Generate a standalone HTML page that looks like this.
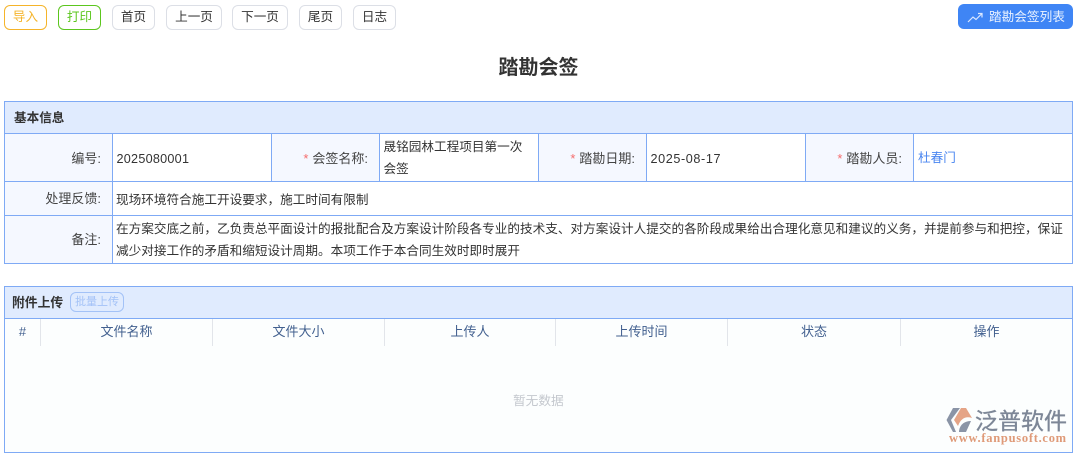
<!DOCTYPE html>
<html lang="zh"><head><meta charset="utf-8"><style>
*{box-sizing:border-box}
html,body{margin:0;padding:0}
body{width:1077px;height:453px;position:relative;overflow:hidden;background:#fff;font-family:"Liberation Sans","Noto Sans CJK SC",sans-serif;font-size:13px;color:#333}
.a{position:absolute;white-space:nowrap}
.btn{position:absolute;top:5px;height:25px;border:1px solid #dcdfe6;border-radius:6px;text-align:center;line-height:23px;font-size:12.6px;color:#333;background:#fff}
.l{position:absolute;background:#7faaf5}
.lab{position:absolute;background:#f5f8ff}
.r{position:absolute;text-align:right;white-space:nowrap;color:#444;line-height:18px}
.r i{font-style:normal;color:#f56c6c;margin-right:4px}
.t{position:absolute;white-space:nowrap;line-height:22px;color:#333;font-size:12.63px}
.th{position:absolute;top:323px;text-align:center;line-height:18px;color:#42608f}
.s{position:absolute;top:319px;width:1px;height:27px;background:#e2e5ea}
</style></head><body>
<div class="btn" style="left:4px;width:43px;border-color:#f5b42a;color:#f5b42a">导入</div>
<div class="btn" style="left:58px;width:43px;border-color:#5cc61e;color:#5cc61e">打印</div>
<div class="btn" style="left:112px;width:43px">首页</div>
<div class="btn" style="left:166px;width:56px">上一页</div>
<div class="btn" style="left:232px;width:56px">下一页</div>
<div class="btn" style="left:299px;width:43px">尾页</div>
<div class="btn" style="left:353px;width:43px">日志</div>
<div class="a" style="left:958px;top:4px;width:115px;height:25px;background:#3f85f5;border-radius:6px"></div>
<svg class="a" style="left:967px;top:12px" width="16" height="11" viewBox="0 0 16 11"><path d="M1 10 L6 5 L9 7.5 L14.5 2 M11 1.5 H15 V5.5" fill="none" stroke="#dbe8ff" stroke-width="1.2"/></svg>
<div class="a" style="left:989px;top:8px;line-height:18px;color:#eaf2ff;font-size:12.65px">踏勘会签列表</div>
<div class="a" style="left:0;width:1077px;top:54px;text-align:center;font-size:20px;font-weight:bold;line-height:28px;color:#333">踏勘会签</div>

<div class="a" style="left:4px;top:101px;width:1069px;height:33px;background:#e0ebfe"></div>
<div class="lab" style="left:5px;top:134px;width:107px;height:130px"></div>
<div class="lab" style="left:272px;top:134px;width:107px;height:47px"></div>
<div class="lab" style="left:539px;top:134px;width:107px;height:47px"></div>
<div class="lab" style="left:806px;top:134px;width:107px;height:47px"></div>
<div class="l" style="left:4px;top:101px;width:1069px;height:1px"></div>
<div class="l" style="left:4px;top:133px;width:1069px;height:1px"></div>
<div class="l" style="left:4px;top:181px;width:1069px;height:1px"></div>
<div class="l" style="left:4px;top:215px;width:1069px;height:1px"></div>
<div class="l" style="left:4px;top:263px;width:1069px;height:1px"></div>
<div class="l" style="left:4px;top:101px;width:1px;height:163px"></div>
<div class="l" style="left:1072px;top:101px;width:1px;height:163px"></div>
<div class="l" style="left:112px;top:133px;width:1px;height:131px"></div>
<div class="l" style="left:271px;top:133px;width:1px;height:48px"></div>
<div class="l" style="left:379px;top:133px;width:1px;height:48px"></div>
<div class="l" style="left:538px;top:133px;width:1px;height:48px"></div>
<div class="l" style="left:646px;top:133px;width:1px;height:48px"></div>
<div class="l" style="left:805px;top:133px;width:1px;height:48px"></div>
<div class="l" style="left:913px;top:133px;width:1px;height:48px"></div>

<div class="a" style="left:14px;top:109px;font-weight:bold;line-height:18px;font-size:12.6px">基本信息</div>
<div class="r" style="left:5px;width:96px;top:150px">编号:</div>
<div class="r" style="left:272px;width:96px;top:150px"><i>*</i>会签名称:</div>
<div class="r" style="left:539px;width:96px;top:150px"><i>*</i>踏勘日期:</div>
<div class="r" style="left:806px;width:96px;top:150px"><i>*</i>踏勘人员:</div>
<div class="r" style="left:5px;width:96px;top:190px">处理反馈:</div>
<div class="r" style="left:5px;width:96px;top:231px">备注:</div>
<div class="t" style="left:116.5px;top:148px;letter-spacing:.25px">2025080001</div>
<div class="t" style="left:383.5px;top:136px">晟铭园林工程项目第一次<br>会签</div>
<div class="t" style="left:650.5px;top:148px;letter-spacing:.6px">2025-08-17</div>
<div class="t" style="left:918px;top:147px;color:#4a86f0">杜春门</div>
<div class="t" style="left:116px;top:189px">现场环境符合施工开设要求，施工时间有限制</div>
<div class="t" style="left:116px;top:218px">在方案交底之前，乙负责总平面设计的报批配合及方案设计阶段各专业的技术支、对方案设计人提交的各阶段成果给出合理化意见和建议的义务，并提前参与和把控，保证<br>减少对接工作的矛盾和缩短设计周期。本项工作于本合同生效时即时展开</div>

<div class="a" style="left:4px;top:286px;width:1069px;height:167px;border:1px solid #7faaf5;background:#fcfefe"></div>
<div class="a" style="left:5px;top:287px;width:1067px;height:32px;background:#e0ebfe;border-bottom:1px solid #7faaf5"></div>
<div class="a" style="left:12px;top:294px;font-weight:bold;line-height:18px;font-size:12.8px">附件上传</div>
<div class="a" style="left:70px;top:292px;width:54px;height:20px;border:1px solid #a3c2f7;border-radius:6px;text-align:center;font-size:11px;line-height:18px;color:#a3c2f7">批量上传</div>
<div class="th" style="left:5px;width:35px">#</div>
<div class="th" style="left:41px;width:171px">文件名称</div>
<div class="th" style="left:213px;width:171px">文件大小</div>
<div class="th" style="left:385px;width:170px">上传人</div>
<div class="th" style="left:556px;width:171px">上传时间</div>
<div class="th" style="left:728px;width:172px">状态</div>
<div class="th" style="left:901px;width:171px">操作</div>
<div class="s" style="left:40px"></div><div class="s" style="left:212px"></div><div class="s" style="left:384px"></div><div class="s" style="left:555px"></div><div class="s" style="left:727px"></div><div class="s" style="left:900px"></div>
<div class="a" style="left:513px;top:392px;line-height:18px;color:#c4c8ce;font-size:12.7px">暂无数据</div>

<svg class="a" style="left:946px;top:407px" width="28" height="26" viewBox="0 0 28 26"><path d="M7 1 H14 L5 13 L10 25 H7 L0.5 13 Z" fill="#8a94a6"/><path d="M15 1 H20 L26 11 C20 9 15 11 12 19 L8 13 Z" fill="#e5a486"/><path d="M13 24 C14 17 19 14 25 14 L20 25 H13 Z" fill="#8a94a6"/></svg>
<div class="a" style="left:975px;top:405px;font-size:23px;line-height:32px;color:#7d8797;-webkit-text-stroke:.35px #7d8797">泛普软件</div>
<div class="a" style="left:949px;top:431px;font-family:'Liberation Serif',serif;font-weight:bold;font-size:12.5px;line-height:14px;color:#df9a78;letter-spacing:.72px">www.fanpusoft.com</div>
</body></html>
